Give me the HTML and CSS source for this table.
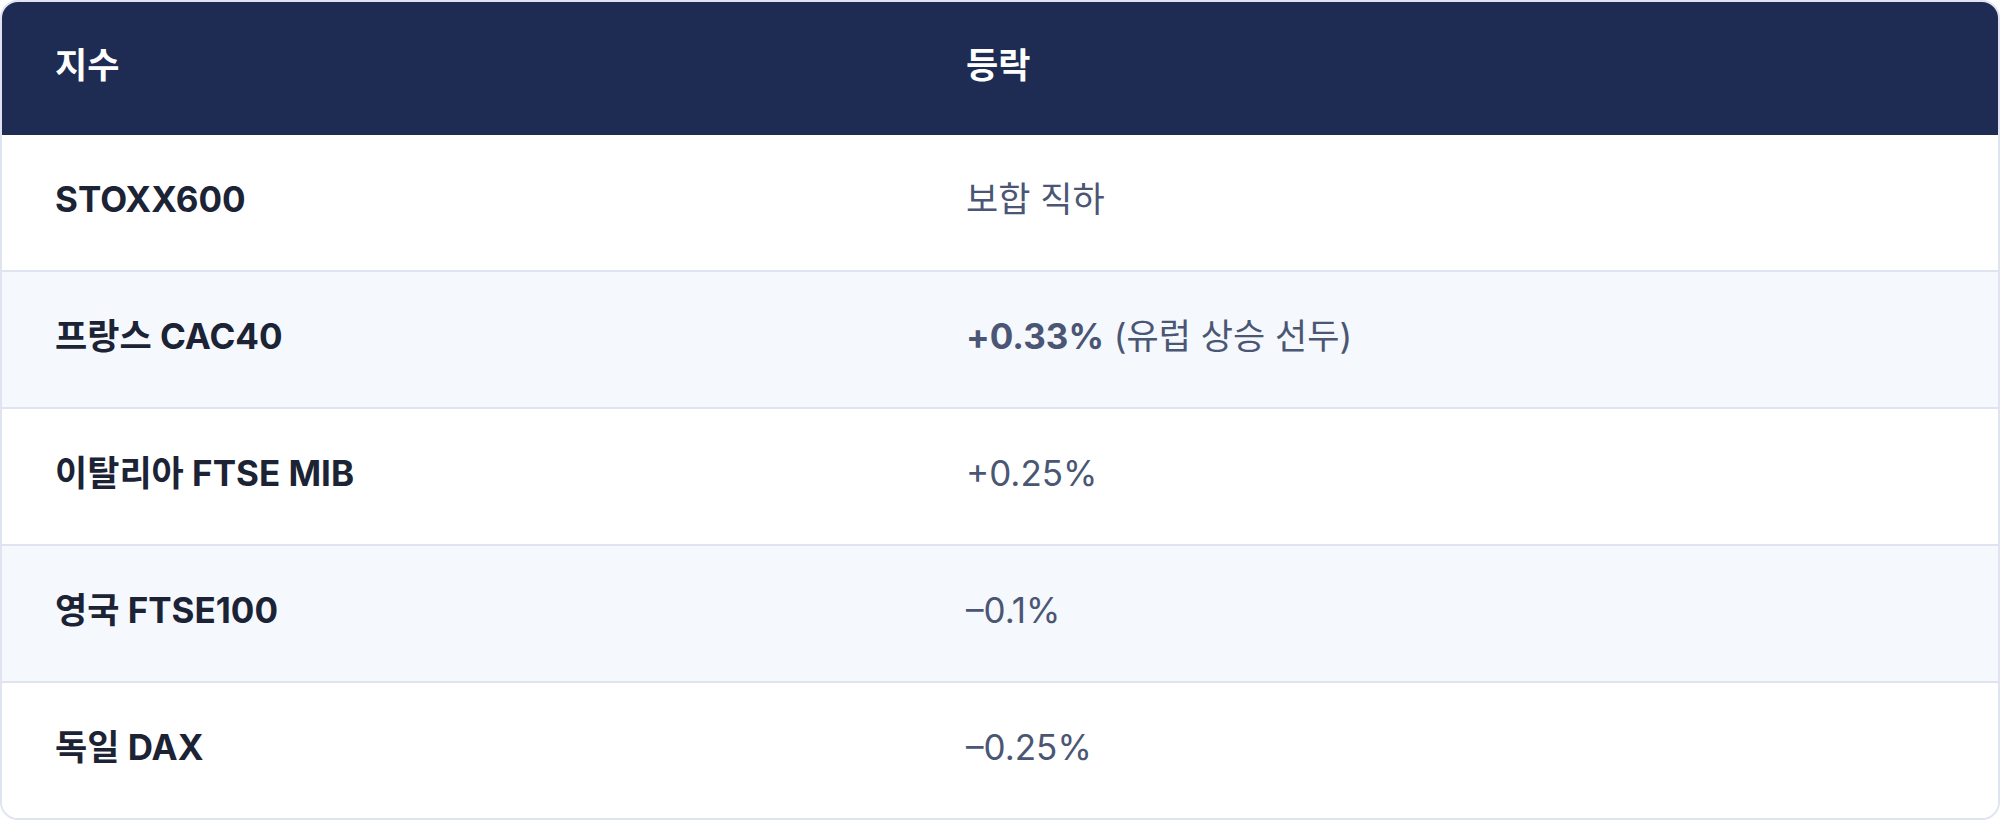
FILE: index.html
```html
<!DOCTYPE html>
<html lang="ko">
<head>
<meta charset="utf-8">
<title>유럽 지수</title>
<link rel="stylesheet" href="styles.css">
</head>
<body>
<div class="table">
  <div class="row head">
    <div class="cell">지수</div>
    <div class="cell">등락</div>
  </div>
  <div class="row">
    <div class="cell name">STOXX600</div>
    <div class="cell val">보합 직하</div>
  </div>
  <div class="row alt">
    <div class="cell name">프랑스 CAC40</div>
    <div class="cell val"><strong>+0.33%</strong> (유럽 상승 선두)</div>
  </div>
  <div class="row">
    <div class="cell name">이탈리아 FTSE MIB</div>
    <div class="cell val">+0.25%</div>
  </div>
  <div class="row alt">
    <div class="cell name">영국 FTSE100</div>
    <div class="cell val">–0.1%</div>
  </div>
  <div class="row last">
    <div class="cell name">독일 DAX</div>
    <div class="cell val">–0.25%</div>
  </div>
</div>
</body>
</html>
```
FILE: styles.css
```css
html, body {
  margin: 0;
  padding: 0;
  background: #ffffff;
}
body {
  font-family: Inter, "Noto Sans CJK KR", sans-serif;
}
.table {
  box-sizing: border-box;
  width: 2000px;
  height: 820px;
  border: 2px solid #dfe4f0;
  border-radius: 18px;
  overflow: hidden;
  display: flex;
  flex-direction: column;
}
.row {
  display: grid;
  grid-template-columns: 911px 1fr;
  align-items: center;
  height: 135px;
  border-bottom: 2px solid #dfe4f0;
  background: #ffffff;
}
.row.alt {
  background: #f5f8fd;
}
.row.last {
  border-bottom: none;
  flex: 1;
}
.row.head {
  height: 133px;
  background: #1e2b53;
  border-bottom: none;
}
.cell {
  padding-left: 53px;
  font-size: 35px;
  line-height: 1.4;
  padding-bottom: 7px;
}
.head .cell {
  color: #ffffff;
  font-weight: 700;
}
.name {
  color: #1b2335;
  font-weight: 700;
}
.val {
  color: #4a5673;
  font-weight: 400;
}
.val strong {
  font-weight: 700;
}
```
